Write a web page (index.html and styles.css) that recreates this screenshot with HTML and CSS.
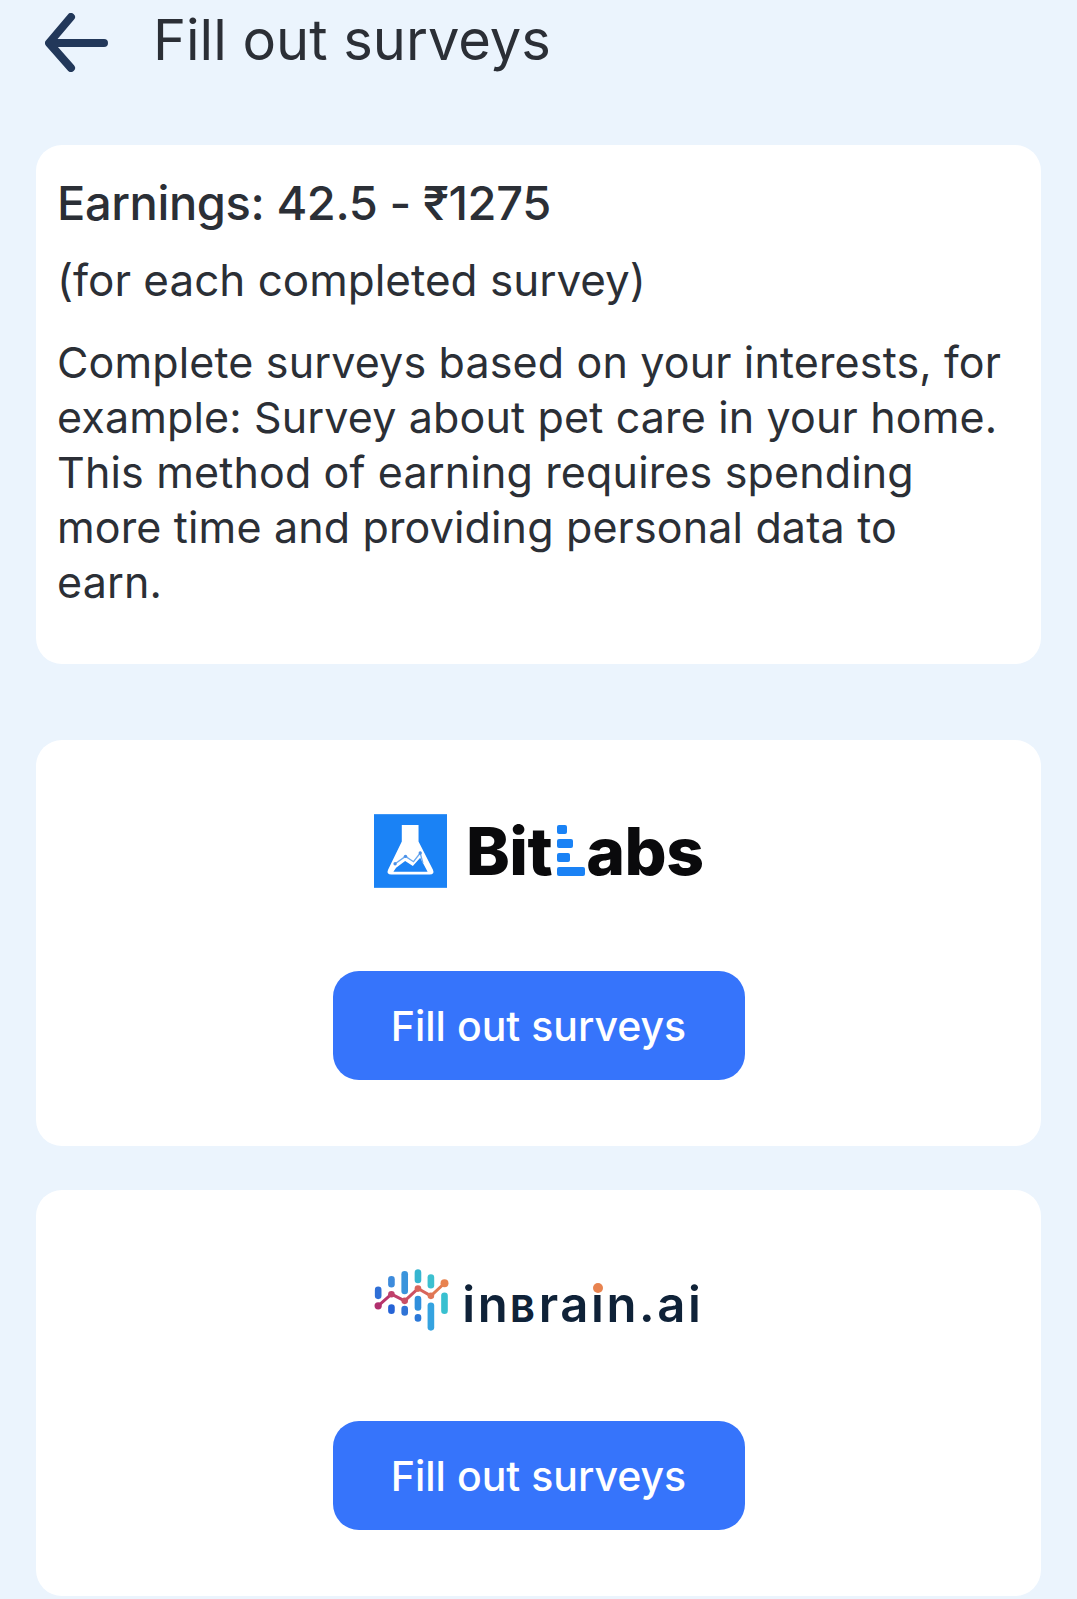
FILE: index.html
```html
<!DOCTYPE html>
<html lang="en">

<head>
  <meta charset="UTF-8">
  <meta name="viewport" content="width=device-width, initial-scale=1.0">
  <title>Fill out surveys</title>
  <link rel="stylesheet" href="styles.css">
</head>

<body>
  <div class="header">
    <svg class="back" viewBox="0 0 63 59" fill="none" stroke="#22385a" stroke-width="8" stroke-linecap="round" stroke-linejoin="round">
      <path d="M59 30H5M26 4L4 30l22 25" />
    </svg>
    <h1 class="title">Fill out surveys</h1>
  </div>

  <div class="card info">
    <h2 class="earnings">Earnings: 42.5 - ₹1275</h2>
    <p class="note">(for each completed survey)</p>
    <p class="desc">Complete surveys based on your interests, for example: Survey about pet care in your home. This method of earning requires spending more time and providing personal data to earn.</p>
  </div>

  <div class="card offer first">
    <div class="logo">
      <svg class="flask" viewBox="42 40 218 220">
        <rect x="42" y="40" width="218" height="220" fill="#1a82f5" />
        <path d="M125 72h50v50l43 84q6 14-10 14H94q-16 0-10-14l41-84z" fill="#fff" />
        <path d="M100 212l8-12 27-20 23 15 22-25 22 42z" fill="#1a82f5" />
        <path d="M105 188l31-22 24 16 20-26 8 30" fill="none" stroke="#6aa8ee" stroke-width="4" />
        <circle cx="105" cy="188" r="5" fill="#4a90e8" />
        <circle cx="136" cy="166" r="5" fill="#4a90e8" />
        <circle cx="180" cy="156" r="5" fill="#4a90e8" />
      </svg>
      <div class="bitlabs">Bit<span class="bars"><i class="bar b1"></i><i class="bar b2"></i><i class="bar b3"></i><i class="bar b4"></i></span>abs</div>
    </div>
    <div class="btn">Fill out surveys</div>
  </div>

  <div class="card offer">
    <div class="logo">
      <svg class="brain" viewBox="40 55 225 190" fill="none" stroke-width="20" stroke-linecap="round">
        <path d="M52 118v18" stroke="#2f6fd6" />
        <path d="M92 86v15" stroke="#3d8bdc" />
        <path d="M92 171v10" stroke="#2563d6" />
        <path d="M132 71v50" stroke="#3a94dc" />
        <path d="M132 176v10" stroke="#2f73d6" />
        <path d="M172 66v22" stroke="#36b5d0" />
        <path d="M172 146v25" stroke="#2f8fdc" />
        <path d="M172 201v3" stroke="#2a78d8" />
        <path d="M211 81v23" stroke="#3cc0d0" />
        <path d="M211 166v65" stroke="#35a3e0" />
        <path d="M252 136v45" stroke="#38c0d0" />
        <path d="M52 166L92 131" stroke="#b8356c" stroke-width="9" />
        <path d="M92 131l40 20" stroke="#c0406a" stroke-width="9" />
        <path d="M132 151l40-37" stroke="#cc5064" stroke-width="9" />
        <path d="M172 114l39 22" stroke="#d8655c" stroke-width="9" />
        <path d="M211 136l41-38" stroke="#e07a52" stroke-width="9" />
        <circle cx="52" cy="166" r="11" fill="#b0306e" />
        <circle cx="92" cy="131" r="10" fill="#c0406a" />
        <circle cx="132" cy="151" r="10" fill="#c84f66" />
        <circle cx="172" cy="114" r="10" fill="#d8655c" />
        <circle cx="211" cy="136" r="10" fill="#e07556" />
        <circle cx="252" cy="98" r="12" fill="#e8834f" />
      </svg>
      <div class="inbrain">in<span class="cap">B</span>ra<span class="dotted">i<b class="orange"></b></span>n.ai</div>
    </div>
    <div class="btn">Fill out surveys</div>
  </div>
</body>

</html>
```

FILE: styles.css
```css
* {
  margin: 0;
  padding: 0;
  box-sizing: border-box;
}

body {
  background-color: #ebf4fd;
  font-family: "Inter", "Noto Sans", sans-serif;
  color: #2b2f36;
  overflow: hidden;
  padding: 0 36px;
}

.header {
  display: flex;
  align-items: center;
  height: 88px;
  margin-bottom: 57px;
  padding-left: 9px;
}

.back {
  width: 63px;
  height: 59px;
  margin-right: 45px;
  margin-bottom: 3px;
}

.title {
  font-size: 56px;
  font-weight: 400;
  margin-bottom: 8px;
}

.card {
  background-color: #ffffff;
  border-radius: 26px;
}

.info {
  height: 519px;
  padding: 29px 34px 0 21px;
  margin-bottom: 76px;
}

.earnings {
  font-size: 47px;
  font-weight: 500;
  letter-spacing: -0.4px;
  margin-bottom: 22px;
}

.note {
  font-size: 44px;
  margin-bottom: 28px;
}

.desc {
  font-size: 43px;
  line-height: 55px;
  letter-spacing: 0.15px;
}

.offer {
  height: 406px;
  display: flex;
  flex-direction: column;
  align-items: center;
  padding-top: 73px;
}

.first {
  margin-bottom: 44px;
}

.logo {
  display: flex;
  align-items: center;
  justify-content: space-between;
  width: 330px;
  height: 75px;
  margin-bottom: 83px;
}

.flask {
  width: 73px;
  height: 74px;
}

.bitlabs {
  font-size: 66px;
  font-weight: 800;
  letter-spacing: -0.5px;
  color: #0a0a0c;
  display: flex;
  align-items: flex-end;
  line-height: 75px;
  padding-top: 2px;
}

.bars {
  display: flex;
  flex-direction: column;
  gap: 5px;
  width: 28px;
  margin: 0 1px 13px 5px;
}

.bar {
  display: block;
  background-color: #1a82f5;
  border-radius: 2px;
  height: 9px;
  width: 10px;
}

.b2 {
  width: 16px;
}

.b3 {
  width: 13px;
}

.b4 {
  width: 28px;
}

.brain {
  width: 75px;
  height: 63px;
}

.inbrain {
  font-size: 49px;
  font-weight: 600;
  color: #0f2238;
  letter-spacing: 2.6px;
  padding-top: 7px;
}

.cap {
  font-size: 37px;
  font-weight: 700;
  letter-spacing: 4px;
}

.dotted {
  position: relative;
}

.orange {
  position: absolute;
  left: 50%;
  top: 8px;
  width: 10px;
  height: 10px;
  margin-left: -6px;
  border-radius: 50%;
  background-color: #e8834f;
}

.btn {
  width: 412px;
  height: 109px;
  line-height: 111px;
  text-align: center;
  background-color: #3674fb;
  color: #ffffff;
  border-radius: 26px;
  font-size: 41px;
  font-weight: 500;
}
```
